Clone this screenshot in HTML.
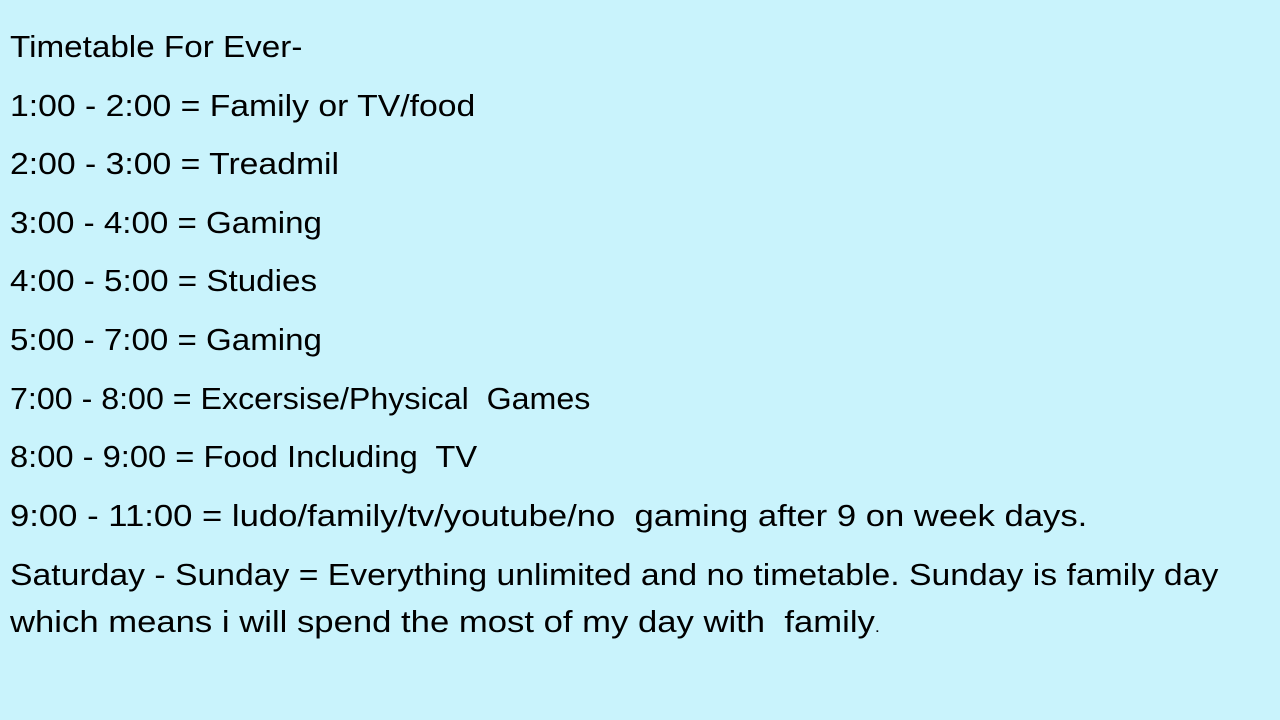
<!DOCTYPE html>
<html><head><meta charset="utf-8"><style>
html,body{margin:0;padding:0;}
body{width:1280px;height:720px;background:#c9f3fc;overflow:hidden;position:relative;font-family:"Liberation Sans",Arial,sans-serif;color:#000;}
.l{position:absolute;left:10px;font-size:31px;line-height:32px;white-space:nowrap;transform:scaleX(1.088);transform-origin:left center;}
</style></head><body>
<div class="l" style="top:31px;transform:scaleX(1.072)">Timetable For Ever-</div>
<div class="l" style="top:90px">1:00 - 2:00 = Family or TV/food</div>
<div class="l" style="top:148px">2:00 - 3:00 = Treadmil</div>
<div class="l" style="top:207px;transform:scaleX(1.068)">3:00 - 4:00 = Gaming</div>
<div class="l" style="top:265px;transform:scaleX(1.07)">4:00 - 5:00 = Studies</div>
<div class="l" style="top:324px;transform:scaleX(1.068)">5:00 - 7:00 = Gaming</div>
<div class="l" style="top:383px;transform:scaleX(1.038)">7:00 - 8:00 = Excersise/Physical&nbsp; Games</div>
<div class="l" style="top:441px;transform:scaleX(1.054)">8:00 - 9:00 = Food Including&nbsp; TV</div>
<div class="l" style="top:500px;transform:scaleX(1.118)">9:00 - 11:00 = ludo/family/tv/youtube/no&nbsp; gaming after 9 on week days.</div>
<div class="l" style="top:559px">Saturday - Sunday = Everything unlimited and no timetable. Sunday is family day</div>
<div class="l" style="top:606px;transform:scaleX(1.118)">which means i will spend the most of my day with&nbsp; family<span style="font-size:16px">.</span></div>
</body></html>
